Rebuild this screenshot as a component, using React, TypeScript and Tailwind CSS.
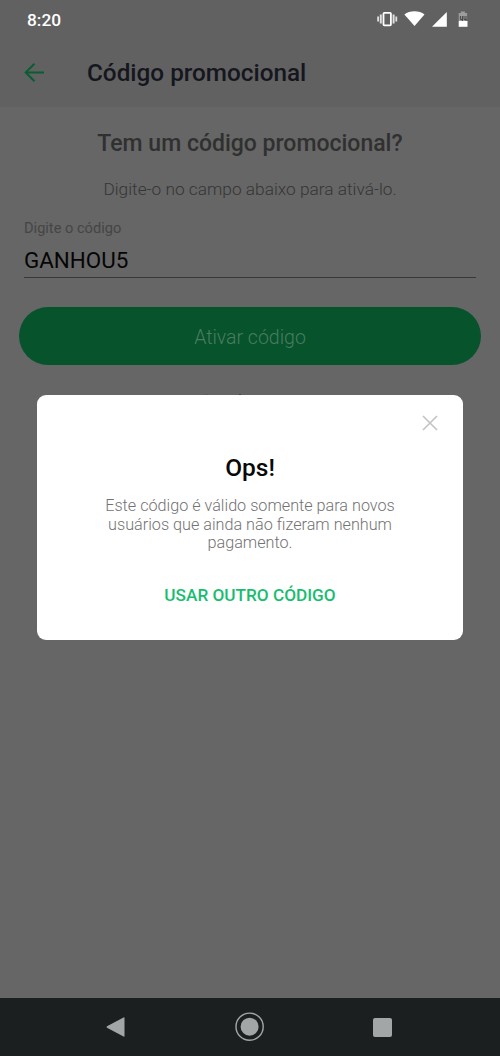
function StatusBar() {
  return (
    <div className="flex h-10 shrink-0 items-center justify-between pl-[27px] pr-[32px] text-white">
      <span className="text-[17.3px] font-medium leading-5">8:20</span>
      <svg width="92" height="20" viewBox="0 0 92 20" fill="currentColor">
        <rect x="7.5" y="2.8" width="7.4" height="12.6" rx="0.8" fill="none" stroke="currentColor" strokeWidth="1.8" />
        <path d="M3.8 4.6h2v9h-2zM1.2 6.6H3v5H1.2zM16.6 4.6h2v9h-2zM19.4 6.6h1.8v5h-1.8z" opacity=".8" />
        <path d="M28.4 4.6C33.5.2 43.4.2 48.5 4.6L38.5 16z" />
        <path d="M70.8 1.9V16.8H56z" />
        <path d="M82.7 3.1h2.2V1.5h4v1.6h2.2v8h-8.4z" opacity=".38" />
        <path d="M82.7 11h8.8v5.8h-8.8z" />
        <path d="M84.4 6v3.4h2.4M86.4 6v5M88 6v3.4h2.4M90 6v5" stroke="#3c3c3c" strokeWidth=".9" fill="none" />
      </svg>
    </div>
  );
}

function AppBar() {
  return (
    <div className="flex h-[67px] shrink-0 items-center pb-[2px] pl-6">
      <svg width="21" height="20" viewBox="0 0 21 20" fill="none" stroke="#095d32" strokeWidth="2">
        <path d="M20 9.4H2M10.5.8 1.7 9.4l8.8 8.8" />
      </svg>
      <h1 className="ml-[42px] text-[24.3px] font-medium leading-7 text-[#15161e]">Código promocional</h1>
    </div>
  );
}

function Dialog() {
  return (
    <div role="dialog" className="absolute left-[37px] top-[395px] flex h-[245px] w-[426px] flex-col items-center rounded-[9px] bg-white">
      <button className="mr-[25px] mt-5 self-end" aria-label="Fechar">
        <svg width="16" height="16" viewBox="0 0 16 16" stroke="#c4c4c4" strokeWidth="1.7">
          <path d="M1 1l14 14M15 1 1 15" />
        </svg>
      </button>
      <h3 className="mt-[23px] text-[24.5px] font-medium leading-7 text-[#090909]">Ops!</h3>
      <p className="mt-[15px] text-center text-[16.2px] font-light leading-[18.7px] text-[#737373]">
        Este código é válido somente para novos
        <br />
        usuários que ainda não fizeram nenhum
        <br />
        pagamento.
      </p>
      <button className="mt-[32px] text-[17.2px] font-medium leading-5 text-[#18bd70]">USAR OUTRO CÓDIGO</button>
    </div>
  );
}

function NavigationBar() {
  return (
    <div className="flex h-[58px] shrink-0 items-center justify-between bg-[#1c1f20] pl-[106px] pr-[108px] text-[#a3a6a7]">
      <svg width="19" height="20" viewBox="0 0 19 20" fill="currentColor">
        <path d="M17.5.5q1-.5 1 .5v18q0 1-1 .5L1 10.8Q0 10 1 9.3z" />
      </svg>
      <svg width="30" height="30" viewBox="0 0 30 30" fill="currentColor">
        <circle cx="15.6" cy="14.7" r="13.6" fill="none" stroke="currentColor" strokeWidth="1.4" />
        <circle cx="15.6" cy="14.7" r="9" />
      </svg>
      <div className="size-[19px] rounded-[2px] bg-[#a3a6a7]" />
    </div>
  );
}

export default function App() {
  return (
    <div className="relative flex h-[1056px] w-[500px] flex-col overflow-hidden bg-[#666666] font-['Roboto',sans-serif]">
      <div className="bg-[#616161]">
        <StatusBar />
        <AppBar />
      </div>
      <main className="flex flex-1 flex-col px-[19px] pt-[23px]">
        <h2 className="text-center text-[23px] font-medium leading-7 text-[#303030]">Tem um código promocional?</h2>
        <p className="mt-[21px] text-center text-[17.3px] font-light leading-5 text-[#353535]">Digite-o no campo abaixo para ativá-lo.</p>
        <div className="mx-[5px] mt-[20px] flex flex-col border-b border-[#383838]">
          <label className="text-[14.6px] leading-[18px] text-[#454545]">Digite o código</label>
          <span className="mt-[10px] pb-[3px] text-[22.4px] leading-[27px] text-[#050505]">GANHOU5</span>
        </div>
        <button className="mt-[29px] h-[58px] rounded-full bg-[#06532c] pt-[4px] text-[19.5px] font-light text-[#4b7c61]">Ativar código</button>
        <div className="mt-[29px] flex h-px gap-[31px] pl-[185px]">
          <span className="h-px w-1 bg-[#5e5e5e]" />
          <span className="h-px w-[2px] bg-[#454545]" />
        </div>
      </main>
      <NavigationBar />
      <Dialog />
    </div>
  );
}
